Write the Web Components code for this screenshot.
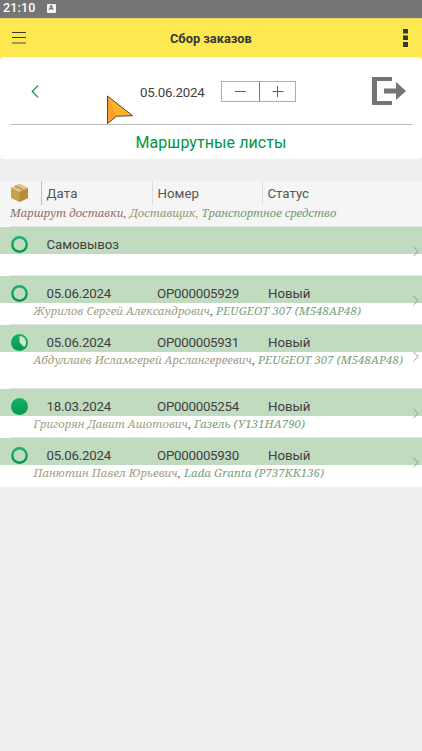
<!DOCTYPE html>
<html lang="ru">
<head>
<meta charset="utf-8">
<title>Сбор заказов</title>
<style>
    body {
        margin: 0;
        height: 751px;
        overflow: hidden;
        background-color: #efefef;
        font-family: Roboto, "Liberation Sans", sans-serif;
        font-size: 13.3px;
        color: #414141;
    }
</style>
</head>
<body>
<orders-app></orders-app>
<script>
// One line of text, tracked so that it fills the given width
class FitText extends HTMLElement {
    constructor() {
        super();
        this.shadowDOM = this.attachShadow({ mode: "open" });
        this.shadowDOM.innerHTML = `
        <style>
        :host {
            display: flex;
            flex: none;
        }
        span {
            flex: none;
            white-space: pre;
        }
        </style>
        <span><slot></slot></span>`;
    }

    connectedCallback() {
        const width = Number(this.getAttribute("width"));
        const span = this.shadowDOM.querySelector("span");
        const count = this.textContent.length;
        this.style.width = `${width}px`;
        span.style.letterSpacing = `${(width - span.getBoundingClientRect().width) / count}px`;
    }
}

class StatusBar extends HTMLElement {
    constructor() {
        super();
        this.shadowDOM = this.attachShadow({ mode: "open" });
        this.shadowDOM.innerHTML = `
        <style>
        :host {
            display: flex;
            align-items: center;
            gap: 11px;
            height: 18px;
            padding-left: 3px;
            box-sizing: border-box;
            background-color: #757575;
            color: white;
            font-size: 12.5px;
            font-weight: 500;
            line-height: 16px;
        }
        fit-text {
            margin-top: -2px;
        }
        b {
            width: 9px;
            height: 9px;
            margin-top: -2px;
            border-radius: 1px;
            background-color: #f4f4f4;
            color: #666;
            font-size: 7px;
            line-height: 9px;
            text-align: center;
        }
        </style>
        <fit-text width="32.5">21:10</fit-text><b>A</b>`;
    }
}

class AppBar extends HTMLElement {
    constructor() {
        super();
        this.shadowDOM = this.attachShadow({ mode: "open" });
        this.shadowDOM.innerHTML = `
        <style>
        :host {
            display: grid;
            grid-template-columns: 1fr auto 1fr;
            align-items: center;
            height: 39px;
            padding: 0 11px;
            box-sizing: border-box;
            border-top: 1px solid #e9d45c;
            background-color: #fde851;
            color: #363636;
            font-size: 12.8px;
            font-weight: bold;
        }
        svg {
            display: block;
        }
        .dots {
            justify-self: end;
            margin-right: 3px;
        }
        </style>
        <svg width="16" height="14" viewBox="0 0 16 14">
            <path d="M1 1.500h14M1 6.500h14" stroke="#3c3a2a"/>
            <path d="M1 12h14" stroke="#a79a42" stroke-width="2"/>
        </svg>
        <fit-text width="82"><slot></slot></fit-text>
        <svg class="dots" width="5" height="18" viewBox="0 0 5 18">
            <path d="M0 0h5v4.500H0zM0 6.500h5V11H0zM0 13h5v5H0z" fill="#363636"/>
        </svg>`;
    }
}

class DateCard extends HTMLElement {
    constructor() {
        super();
        this.shadowDOM = this.attachShadow({ mode: "open" });
        this.shadowDOM.innerHTML = `
        <style>
        :host {
            display: block;
            height: 102px;
            padding: 0 10px;
            box-sizing: border-box;
            border-radius: 4px;
            background-color: white;
            position: relative;
        }
        :host::before {
            content: "";
            position: absolute;
            z-index: -1;
            inset: 0 0 auto;
            height: 5px;
            background-color: #fde851;
        }
        .bar {
            display: flex;
            align-items: center;
            height: 67px;
            border-bottom: 1px solid #bcbcbc;
        }
        .back {
            margin: 1px 101px 0 21px;
        }
        .bar fit-text {
            margin-top: 3px;
        }
        .stepper {
            display: flex;
            width: 75px;
            height: 21px;
            box-sizing: border-box;
            margin: 1px 0 0 16.500px;
            border: 1px solid #83c5a0;
        }
        .stepper svg + svg {
            border-left: 1px solid #32a566;
        }
        .exit {
            margin-left: 76px;
        }
        svg {
            flex: none;
        }
        .link {
            display: flex;
            justify-content: center;
            color: #009640;
            font-size: 16px;
            line-height: 36px;
        }
        .cursor {
            position: absolute;
            left: 106px;
            top: 38px;
        }
        </style>
        <div class="bar">
            <svg class="back" width="8" height="13" viewBox="0 0 8 13">
                <path d="M7 .7 1.200 6.500 7 12.300" fill="none" stroke="#009640" stroke-width="1.200"/>
            </svg>
            <fit-text width="64.5">05.06.2024</fit-text>
            <div class="stepper">
                <svg width="37" height="19" viewBox="0 0 37 19"><path d="M13 9.500h11" stroke="#009640"/></svg>
                <svg width="35" height="19" viewBox="0 0 35 19"><path d="M12.500 9.500h11M17.500 4v11" stroke="#009640"/></svg>
            </div>
            <svg class="exit" width="34" height="28" viewBox="0 0 34 28">
                <path d="M20 0v4H5v20h15v4H0V0zM12 11.500h12V5l10 9-10 9v-6.500H12z" fill="#757575"/>
            </svg>
        </div>
        <div class="link"><fit-text width="151">Маршрутные листы</fit-text></div>
        <svg class="cursor" width="30" height="32" viewBox="0 0 30 32">
            <path d="M1.500 1v27.500l9-7.300 16-.5z" fill="#fbb32a"/>
            <path d="M1.500 1v27.500l9-7.300z" fill="#fb9e2c"/>
            <path d="M1.500 1v27.500l9-7.300 16-.5z" fill="none" stroke="#554631"/>
        </svg>`;
    }
}

class OrdersHeader extends HTMLElement {
    constructor() {
        super();
        this.shadowDOM = this.attachShadow({ mode: "open" });
        this.shadowDOM.innerHTML = `
        <style>
        :host {
            display: block;
            height: 45px;
            margin-top: 22px;
            background-color: #f5f5f5;
            color: #555;
        }
        .titles {
            display: grid;
            grid-template-columns: 41px 111px 110px 1fr;
            grid-template-rows: 24px;
            height: 24px;
            line-height: 25px;
        }
        .titles svg {
            margin: 3px 0 0 11px;
        }
        .titles div {
            padding-left: 4.5px;
            border-left: 1px solid #ddd;
        }
        .titles div:nth-of-type(1) {
            border-color: #bdbdbd;
        }
        .legend {
            display: flex;
            padding-left: 10px;
            font: italic 11.3px/15px "Noto Serif", "Liberation Serif", serif;
        }
        </style>
        <div class="titles">
            <svg width="17" height="18" viewBox="0 0 17 18">
                <path d="m0 4 8.500-4L17 4v10l-8.500 4L0 14z" fill="#c9a14b"/>
                <path d="m0 4 8.500-4L17 4 8.500 8z" fill="#dfc785"/>
                <path d="M8.500 8 17 4v10l-8.500 4z" fill="#b58e39"/>
                <path d="m4 2 8.500 4" stroke="#b99957" stroke-width="1.500"/>
            </svg>
            <div><fit-text width="31">Дата</fit-text></div>
            <div><fit-text width="41.5">Номер</fit-text></div>
            <div><fit-text width="41.5">Статус</fit-text></div>
        </div>
        <div class="legend">
            <fit-text width="119.5" style="color: #966c6d">Маршрут доставки, </fit-text>
            <fit-text width="72" style="color: #989672">Доставщик, </fit-text>
            <fit-text width="135" style="color: #729a72">Транспортное средство</fit-text>
        </div>`;
    }
}

const markers = {
    empty: `<circle cx="8.500" cy="8.500" r="7.200" fill="none" stroke="url(#g)" stroke-width="2.400"/>`,
    // Disc with a light sector for the share left to pick
    part: `<circle cx="8.500" cy="8.500" r="8.500" fill="url(#g)"/>
        <path d="M8.500 8.500V2a6.500 6.500 0 0 1 4.600 11.100z" fill="#cfe5d0"/>`,
    full: `<circle cx="8.500" cy="8.500" r="8.500" fill="url(#g)"/>`
};

class OrderRow extends HTMLElement {
    constructor() {
        super();
        this.shadowDOM = this.attachShadow({ mode: "open" });
    }

    set order(order) {
        this._order = order;
        this.render();
    }

    render() {
        const { date, dateWidth, number, status, marker, person, personWidth, car, carWidth, height } = this._order;
        this.shadowDOM.innerHTML = `
        <style>
        :host {
            display: block;
            height: ${height}px;
            position: relative;
            background:
                linear-gradient(#c0dbc0, #c0dbc0) 0 1px / 100% 27px no-repeat,
                linear-gradient(#e4e4e4, #e4e4e4) 10px 0 / 100% 1px no-repeat white;
        }
        .main {
            display: grid;
            grid-template-columns: 46.500px 110.500px 111px 1fr;
            align-items: start;
            height: 28px;
            line-height: 18px;
        }
        .main fit-text {
            margin-top: 10px;
        }
        .marker {
            margin: 9.500px 0 0 11px;
        }
        .delivery {
            display: flex;
            padding-left: 33.500px;
            font: italic 11.3px/15px "Noto Serif", "Liberation Serif", serif;
        }
        .person {
            color: #a19d7f;
        }
        .person i {
            color: #555;
        }
        .car {
            color: #76a07c;
        }
        .more {
            position: absolute;
            right: 3px;
            top: calc(50% - 5px);
        }
        </style>
        <div class="main">
            <svg class="marker" width="17" height="17" viewBox="0 0 17 17">
                <defs>
                    <linearGradient id="g" x2="0" y2="1">
                        <stop stop-color="#16b26c"/>
                        <stop offset="1" stop-color="#009a48"/>
                    </linearGradient>
                </defs>
                ${markers[marker]}
            </svg>
            <fit-text width="${dateWidth || 64.5}">${date}</fit-text>
            ${number ? `<fit-text width="82">${number}</fit-text>
            <fit-text width="42.5">${status}</fit-text>` : ""}
        </div>
        ${person ? `<div class="delivery">
            <fit-text class="person" width="${personWidth}">${person}<i>, </i></fit-text>
            <fit-text class="car" width="${carWidth}">${car}</fit-text>
        </div>` : ""}
        <svg class="more" width="6" height="11" viewBox="0 0 6 11">
            <path d="m.5 1 4.700 4.500L.5 10" fill="none" stroke="#8c958c"/>
        </svg>`;
    }
}

const orders = [
    { date: "Самовывоз", dateWidth: 72.5, marker: "empty", height: 49 },
    { date: "05.06.2024", number: "ОР000005929", status: "Новый", marker: "empty", height: 49,
        person: "Журилов Сергей Александрович", personWidth: 182.5, car: "PEUGEOT 307 (М548АР48)", carWidth: 145 },
    { date: "05.06.2024", number: "ОР000005931", status: "Новый", marker: "part", height: 64,
        person: "Абдуллаев Исламгерей Арслангереевич", personWidth: 224.5, car: "PEUGEOT 307 (М548АР48)", carWidth: 145 },
    { date: "18.03.2024", number: "ОР000005254", status: "Новый", marker: "full", height: 49,
        person: "Григорян Давит Ашотович", personWidth: 160.5, car: "Газель (У131НА790)", carWidth: 111 },
    { date: "05.06.2024", number: "ОР000005930", status: "Новый", marker: "empty", height: 50,
        person: "Панютин Павел Юрьевич", personWidth: 150.5, car: "Lada Granta (Р737КК136)", carWidth: 140 }
];

class OrdersApp extends HTMLElement {
    connectedCallback() {
        this.shadowDOM = this.attachShadow({ mode: "open" });
        this.shadowDOM.innerHTML = `
        <style>
        :host {
            display: block;
            position: relative;
            z-index: 0;
        }
        </style>
        <status-bar></status-bar>
        <app-bar>Сбор заказов</app-bar>
        <date-card></date-card>
        <orders-header></orders-header>`;
        orders.forEach(order => {
            const row = document.createElement("order-row");
            this.shadowDOM.appendChild(row);
            row.order = order;
        });
    }
}

customElements.define("fit-text", FitText);
customElements.define("status-bar", StatusBar);
customElements.define("app-bar", AppBar);
customElements.define("date-card", DateCard);
customElements.define("orders-header", OrdersHeader);
customElements.define("order-row", OrderRow);
customElements.define("orders-app", OrdersApp);
</script>
</body>
</html>
